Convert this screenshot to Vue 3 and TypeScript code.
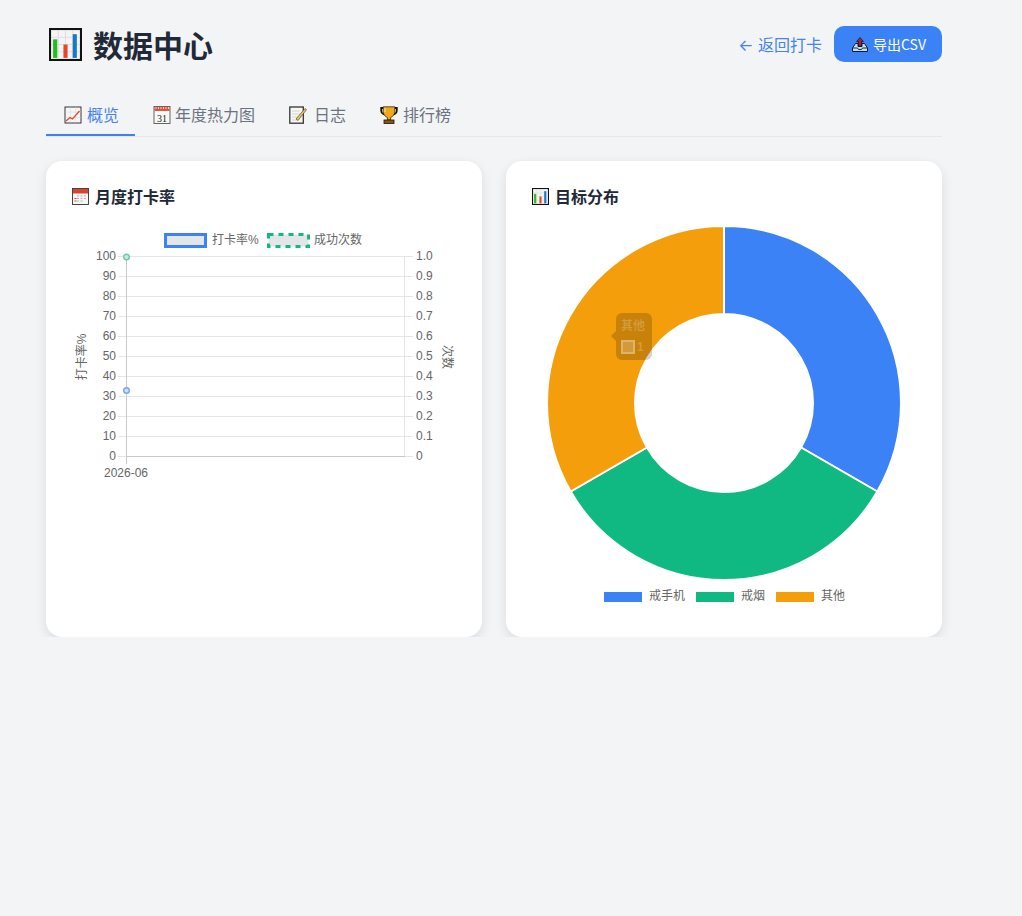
<script setup lang="ts">
const tabs = [
  { icon: 'i-trend', label: '概览', active: true },
  { icon: 'i-cal31', label: '年度热力图', active: false },
  { icon: 'i-memo', label: '日志', active: false },
  { icon: 'i-trophy', label: '排行榜', active: false },
]

const plotTop = 256.5
const plotBottom = 456.5
const leftTicks = Array.from({ length: 11 }, (_, i) => {
  const value = 100 - i * 10
  return {
    y: plotTop + ((plotBottom - plotTop) * i) / 10,
    left: String(value),
    right: value === 0 ? '0' : (value / 100).toFixed(1),
  }
})

// donut centre and radii, measured in svg units
const cx = 192
const cy = 177
const outer = 177
const inner = 89

const arc = (from: number, to: number) => {
  const p = (r: number, deg: number) => {
    const a = ((deg - 90) * Math.PI) / 180
    return `${(cx + r * Math.cos(a)).toFixed(2)} ${(cy + r * Math.sin(a)).toFixed(2)}`
  }
  return `M${p(outer, from)} A${outer} ${outer} 0 0 1 ${p(outer, to)} L${p(inner, to)} A${inner} ${inner} 0 0 0 ${p(inner, from)} Z`
}

const slices = [
  { color: '#3b82f6', d: arc(0, 120) },
  { color: '#10b981', d: arc(120, 240) },
  { color: '#f59e0b', d: arc(240, 360) },
]

const donutLegend = [
  { label: '戒手机', color: '#3b82f6', x: 72, tx: 117 },
  { label: '戒烟', color: '#10b981', x: 164, tx: 209 },
  { label: '其他', color: '#f59e0b', x: 244, tx: 289 },
]
</script>

<template>
  <div class="page">
    <svg class="defs" width="0" height="0" aria-hidden="true">
      <symbol id="i-bars" viewBox="0 0 32 32">
        <rect x="1" y="1" width="30" height="30" fill="#f4f4f4" stroke="#111" stroke-width="2" />
        <path d="M2 9h28M2 16h28M2 23h28M9 2v28M16 2v28M23 2v28" stroke="#dedede" stroke-width="1" />
        <rect x="4" y="11" width="4" height="18" fill="#1fbf1f" />
        <rect x="14" y="16" width="4" height="13" fill="#e8452a" />
        <rect x="23" y="6" width="4" height="23" fill="#1578c8" />
      </symbol>
      <symbol id="i-trend" viewBox="0 0 18 18">
        <rect x="1" y="1" width="16" height="16" fill="#f6f6f6" stroke="#222" stroke-width="0.9" />
        <path d="M1.5 6h15M1.5 11.5h15M6.5 1.5v15M11.5 1.5v15" stroke="#e0e0e0" stroke-width="0.7" />
        <path d="M2 15l4-3.5 2.5 1.5 7-8" fill="none" stroke="#e8452a" stroke-width="1.3" />
      </symbol>
      <symbol id="i-cal31" viewBox="0 0 18 18">
        <rect x="1" y="0.5" width="16" height="17" fill="#f8f8f8" stroke="#555" stroke-width="0.9" />
        <rect x="1.5" y="1" width="15" height="4" fill="#e2543a" />
        <path d="M3 1v2M5.5 1v2M8 1v2M10.5 1v2M13 1v2M15.5 1v2" stroke="#fff" stroke-width="0.7" />
      </symbol>
      <symbol id="i-memo" viewBox="0 0 18 18">
        <rect x="0.8" y="1" width="13.5" height="16.2" fill="#f7f7f2" stroke="#333" stroke-width="1.3" />
        <path d="M3 5h8M3 8h8M3 11h6M3 14h5" stroke="#cfcfcf" stroke-width="0.9" />
        <path d="M7 13L16 2.5l1.5 1.2L9 14.5z" fill="#f2c35b" stroke="#333" stroke-width="0.6" />
      </symbol>
      <symbol id="i-trophy" viewBox="0 0 18 18">
        <path d="M3.5 2H1.200v2.5c0 2.5 2 4 4 4M14.500 2h2.300v2.500c0 2.500-2 4-4 4" fill="none" stroke="#1c1408" stroke-width="1.8" />
        <path d="M3.200 0.800h11.600v5c0 3-2.400 5-4.200 5.700V14H7.400v-2.500C5.600 10.800 3.200 8.800 3.200 5.800z" fill="#f0a818" stroke="#1c1408" stroke-width="0.7" />
        <path d="M5 2v4" stroke="#fbe08a" stroke-width="1.2" />
        <rect x="4" y="14" width="10" height="3.5" fill="#8a5414" stroke="#1c1408" stroke-width="0.8" />
      </symbol>
      <symbol id="i-cal" viewBox="0 0 17 17">
        <rect x="0.5" y="0.5" width="16" height="16" fill="#f5f5f5" stroke="#333" stroke-width="0.9" />
        <rect x="1" y="1" width="15" height="4.5" fill="#d9442e" />
        <path d="M5 8h2M8.5 8h2M12 8h2M5 10.5h2M8.5 10.5h2M12 10.5h2M5 13h2M8.5 13h2" stroke="#b5b5b5" stroke-width="1.1" />
        <path d="M2.5 10.5h2M2.5 13h2" stroke="#d9442e" stroke-width="1.1" />
      </symbol>
      <symbol id="i-outbox" viewBox="0 0 16 15">
        <path d="M8 0.5l3.4 4H9.5V9h-3V4.500H4.600z" fill="#a3233a" stroke="#1b1b2a" stroke-width="0.8" />
        <path d="M3.5 6.5h2.5V9.5h4V6.5h2.5L15.5 11v3.5H0.5V11z" fill="#bfe0f5" stroke="#10182a" stroke-width="1" />
        <path d="M1 11h4.5l1 1.5h3l1-1.5H15" fill="none" stroke="#10182a" stroke-width="0.9" />
      </symbol>
    </svg>

    <header class="top">
      <h1 class="title">
        <svg class="title-icon"><use href="#i-bars" /></svg>
        <span>数据中心</span>
      </h1>
      <div class="actions">
        <a class="back">← 返回打卡</a>
        <button class="export">
          <svg class="export-icon"><use href="#i-outbox" /></svg>
          <span>导出CSV</span>
        </button>
      </div>
    </header>

    <nav class="tabs">
      <div v-for="tab in tabs" :key="tab.label" class="tab" :class="{ active: tab.active }">
        <svg class="tab-icon" :class="tab.icon" viewBox="0 0 18 18">
          <use :href="'#' + tab.icon" width="18" height="18" />
          <text v-if="tab.icon === 'i-cal31'" x="9" y="15.5" class="cal-num">31</text>
        </svg>
        <span>{{ tab.label }}</span>
      </div>
    </nav>

    <section class="cards">
      <div class="card">
        <h3 class="card-title">
          <svg class="card-icon"><use href="#i-cal" /></svg>
          <span>月度打卡率</span>
        </h3>
        <svg class="chart" viewBox="72 226 384 260" width="384" height="260">
          <rect x="165.5" y="234.5" width="40" height="12" fill="#e4e5e7" stroke="#3b82f6" stroke-width="3" />
          <text x="212" y="244" class="label">打卡率%</text>
          <rect x="268.5" y="234.5" width="40" height="12" fill="#e4e5e7" stroke="#10b981" stroke-width="3" stroke-dasharray="5 5" />
          <text x="314" y="244" class="label">成功次数</text>

          <g v-for="t in leftTicks" :key="t.y">
            <line x1="118" :y1="t.y" x2="413" :y2="t.y" class="grid" />
            <text x="116" :y="t.y + 3.5" class="tick end">{{ t.left }}</text>
            <text x="416" :y="t.y + 3.5" class="tick">{{ t.right }}</text>
          </g>
          <line x1="126.5" y1="256" x2="126.5" y2="464" class="axis" />
          <line x1="404.5" y1="256" x2="404.5" y2="457" class="grid" />
          <line x1="126" y1="456.5" x2="405" y2="456.5" class="axis" />

          <text x="126" y="477" class="tick middle">2026-06</text>
          <text transform="translate(86 357) rotate(-90)" class="label middle">打卡率%</text>
          <text transform="translate(443 357) rotate(90)" class="label middle">次数</text>

          <circle cx="126.5" cy="257" r="2.8" fill="#c9e9de" stroke="#6cc9a8" stroke-width="1.4" />
          <circle cx="126.5" cy="390.5" r="2.8" fill="#cfe0fb" stroke="#76a5f0" stroke-width="1.4" />
        </svg>
      </div>

      <div class="card">
        <h3 class="card-title">
          <svg class="card-icon"><use href="#i-bars" /></svg>
          <span>目标分布</span>
        </h3>
        <svg class="chart" viewBox="0 0 384 385" width="384" height="385">
          <path v-for="s in slices" :key="s.color" :d="s.d" :fill="s.color" stroke="#fff" stroke-width="2" />
          <g v-for="l in donutLegend" :key="l.label">
            <rect :x="l.x" y="366" width="38" height="10" :fill="l.color" />
            <text :x="l.tx" y="374" class="label">{{ l.label }}</text>
          </g>
        </svg>
        <div class="tip">
          <span class="tip-head">其他</span>
          <span class="tip-row"><i class="tip-swatch"></i>1</span>
        </div>
      </div>
    </section>
  </div>
</template>

<style>
body {
  background: #f3f4f6;
}
</style>

<style scoped>
.page {
  width: 896px;
  margin-left: 46px;
  padding-top: 26px;
  font-family: "Noto Sans CJK SC", sans-serif;
}

.defs {
  position: absolute;
}

.cal-num {
  font-family: "Liberation Serif", serif;
  font-size: 10px;
  text-anchor: middle;
  fill: #222;
}

.top {
  display: flex;
  align-items: center;
  justify-content: space-between;
  height: 36px;
}

.title {
  display: flex;
  align-items: center;
  margin: 0;
  font-size: 30px;
  font-weight: 700;
  color: #1f2937;
}

.title-icon {
  width: 33px;
  height: 33px;
  margin-left: 3px;
  margin-right: 11px;
}

.actions {
  display: flex;
  align-items: center;
  gap: 12px;
}

.back {
  font-family: Inter, "Noto Sans CJK SC", sans-serif;
  font-size: 16px;
  color: #4583ef;
}

.export {
  display: flex;
  align-items: center;
  width: 108px;
  height: 36px;
  padding: 0 0 0 18px;
  border: none;
  border-radius: 10px;
  background: #3b82f6;
  color: #fff;
  font-family: inherit;
  font-size: 14px;
}

.export-icon {
  width: 16px;
  height: 15px;
  margin-right: 5px;
}

.tabs {
  display: flex;
  margin-top: 33px;
  border-bottom: 1px solid #e5e7eb;
}

.tab {
  display: flex;
  align-items: center;
  height: 39px;
  padding: 0 16px;
  font-size: 16px;
  color: #6b7280;
  border-bottom: 2px solid transparent;
}

.tab span {
  position: relative;
  top: -1px;
}

.tab.active {
  color: #4583ef;
  border-bottom-color: #3b82f6;
}

.tab-icon {
  width: 18px;
  height: 18px;
  margin-left: 2px;
  margin-right: 5px;
}

.tab-icon.i-cal31 {
  margin-right: 4px;
}

.tab-icon.i-memo {
  margin-right: 7px;
}

.cards {
  display: grid;
  grid-template-columns: 1fr 1fr;
  gap: 24px;
  margin-top: 24px;
}

.card {
  position: relative;
  height: 476px;
  box-sizing: border-box;
  padding: 25px 26px 26px;
  background: #fff;
  border-radius: 16px;
  box-shadow: 0 4px 12px rgba(0, 0, 0, 0.1);
}

.card-title {
  display: flex;
  align-items: center;
  height: 20px;
  margin: 0 0 20px;
  font-size: 16px;
  font-weight: 600;
  color: #1f2937;
}

.card-icon {
  width: 17px;
  height: 17px;
  margin-right: 6px;
}

.chart {
  display: block;
  font-family: "Liberation Sans", "Noto Sans CJK SC", sans-serif;
  /* own layer, so text gets the grey antialiasing a canvas chart has */
  opacity: 0.999;
}

.label {
  font-size: 12px;
  fill: #666;
}

.tick {
  font-size: 12px;
  fill: #666;
}

.end {
  text-anchor: end;
}

.middle {
  text-anchor: middle;
}

.grid {
  stroke: #e5e5e5;
  stroke-width: 1;
}

.axis {
  stroke: #c8c8c8;
  stroke-width: 1;
}

/* chart.js tooltip caught mid fade */
.tip {
  position: absolute;
  left: 110px;
  top: 152px;
  display: flex;
  flex-direction: column;
  align-items: flex-start;
  width: 36px;
  height: 47px;
  box-sizing: border-box;
  padding: 5px;
  border-radius: 6px;
  background: rgba(0, 0, 0, 0.18);
  color: rgba(255, 255, 255, 0.22);
  font-family: "Liberation Sans", "Noto Sans CJK SC", sans-serif;
  font-size: 12px;
  font-weight: 700;
}

.tip::before {
  content: "";
  position: absolute;
  left: -5px;
  top: 18px;
  border-style: solid;
  border-width: 5px 5px 5px 0;
  border-color: transparent rgba(0, 0, 0, 0.18) transparent transparent;
}

.tip-head {
  line-height: 17px;
  margin-bottom: 5px;
}

.tip-row {
  display: flex;
  align-items: center;
  gap: 2px;
  line-height: 14px;
}

.tip-swatch {
  width: 14px;
  height: 14px;
  box-sizing: border-box;
  border: 2px solid rgba(255, 255, 255, 0.25);
  background: rgba(255, 255, 255, 0.2);
}
</style>
